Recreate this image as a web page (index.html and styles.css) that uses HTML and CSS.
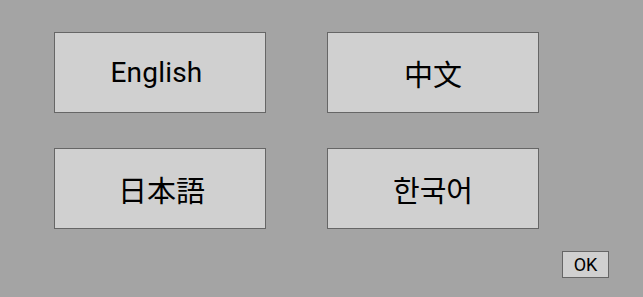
FILE: index.html
```html
<!DOCTYPE html>
<html>
<head>
<meta charset="utf-8">
<link rel="stylesheet" href="styles.css">
</head>
<body>
<div class="screen">
  <div class="grid">
    <button class="lang latin">English</button>
    <button class="lang cjk" lang="zh">中文</button>
    <button class="lang cjk ja" lang="ja">日本語</button>
    <button class="lang cjk" lang="ko">한국어</button>
  </div>
  <div class="footer">
    <button class="ok">OK</button>
  </div>
</div>
</body>
</html>
```
FILE: styles.css
```css
html, body {
  margin: 0;
  padding: 0;
  background: #a4a4a4;
}
.screen {
  width: 643px;
  height: 297px;
  box-sizing: border-box;
  padding: 32px 0 0 54px;
  font-family: Roboto, "Noto Sans CJK JP", "Noto Sans CJK KR", sans-serif;
}
.grid {
  display: grid;
  grid-template-columns: 212px 212px;
  grid-template-rows: 81px 81px;
  column-gap: 61px;
  row-gap: 35px;
}
.lang {
  margin: 0;
  padding: 0;
  background: #d0d0d0;
  border: 1px solid #666666;
  color: #000000;
  display: flex;
  align-items: center;
  justify-content: center;
}
.latin {
  font-family: Roboto, sans-serif;
  font-size: 28px;
  letter-spacing: 0.2px;
  padding-right: 7px;
}
.cjk {
  font-family: "Noto Sans CJK SC", "Noto Sans CJK JP", "Noto Sans CJK KR", sans-serif;
  font-size: 29px;
}
.cjk:lang(ja) {
  font-family: "Noto Sans CJK JP", sans-serif;
  padding-left: 3px;
}
.cjk:lang(ko) {
  font-family: "Noto Sans CJK KR", sans-serif;
}
.footer {
  display: flex;
  justify-content: flex-end;
  padding: 22px 34px 0 0;
}
.ok {
  margin: 0;
  padding: 0;
  width: 47px;
  height: 27px;
  background: #d0d0d0;
  border: 1px solid #666666;
  font-family: Roboto, sans-serif;
  font-size: 18px;
  color: #000000;
}
```
